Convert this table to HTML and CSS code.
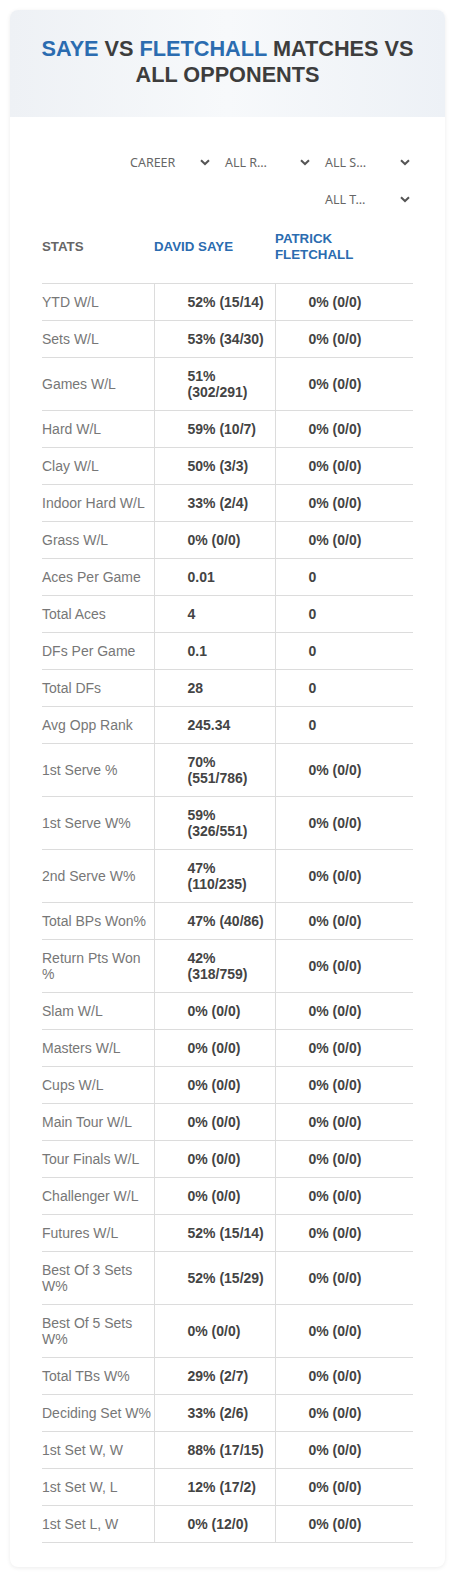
FILE: index.html
```html
<!DOCTYPE html>
<html>
  <head>
    <meta charset="utf-8" />
    <title>Saye vs Fletchall</title>
    <link rel="stylesheet" href="styles.css">
  </head>
  <body>
    <div class="card">
      <div class="card-header">
        <h1><span class="blue">SAYE</span> VS <span class="blue">FLETCHALL</span> MATCHES VS ALL OPPONENTS</h1>
      </div>

      <div class="filters">
        <div class="select first"><span>CAREER</span><svg width="10" height="7" viewBox="0 0 10 7"><path d="M1 1.2 L5 5 L9 1.2" fill="none" stroke="#555" stroke-width="2"/></svg></div>
        <div class="select"><span>ALL R…</span><svg width="10" height="7" viewBox="0 0 10 7"><path d="M1 1.2 L5 5 L9 1.2" fill="none" stroke="#555" stroke-width="2"/></svg></div>
        <div class="select"><span>ALL S…</span><svg width="10" height="7" viewBox="0 0 10 7"><path d="M1 1.2 L5 5 L9 1.2" fill="none" stroke="#555" stroke-width="2"/></svg></div>
        <div class="select"><span>ALL T…</span><svg width="10" height="7" viewBox="0 0 10 7"><path d="M1 1.2 L5 5 L9 1.2" fill="none" stroke="#555" stroke-width="2"/></svg></div>
      </div>

      <table class="stats">
        <colgroup>
          <col class="c1">
          <col class="c2">
          <col class="c3">
        </colgroup>
        <thead>
          <tr>
            <th class="muted">STATS</th>
            <th>DAVID SAYE</th>
            <th>PATRICK FLETCHALL</th>
          </tr>
        </thead>
        <tbody>
          <tr><td>YTD W/L</td><td>52% (15/14)</td><td>0% (0/0)</td></tr>
          <tr><td>Sets W/L</td><td>53% (34/30)</td><td>0% (0/0)</td></tr>
          <tr><td>Games W/L</td><td>51% (302/291)</td><td>0% (0/0)</td></tr>
          <tr><td>Hard W/L</td><td>59% (10/7)</td><td>0% (0/0)</td></tr>
          <tr><td>Clay W/L</td><td>50% (3/3)</td><td>0% (0/0)</td></tr>
          <tr><td>Indoor Hard W/L</td><td>33% (2/4)</td><td>0% (0/0)</td></tr>
          <tr><td>Grass W/L</td><td>0% (0/0)</td><td>0% (0/0)</td></tr>
          <tr><td>Aces Per Game</td><td>0.01</td><td>0</td></tr>
          <tr><td>Total Aces</td><td>4</td><td>0</td></tr>
          <tr><td>DFs Per Game</td><td>0.1</td><td>0</td></tr>
          <tr><td>Total DFs</td><td>28</td><td>0</td></tr>
          <tr><td>Avg Opp Rank</td><td>245.34</td><td>0</td></tr>
          <tr><td>1st Serve %</td><td>70% (551/786)</td><td>0% (0/0)</td></tr>
          <tr><td>1st Serve W%</td><td>59% (326/551)</td><td>0% (0/0)</td></tr>
          <tr><td>2nd Serve W%</td><td>47% (110/235)</td><td>0% (0/0)</td></tr>
          <tr><td>Total BPs Won%</td><td>47% (40/86)</td><td>0% (0/0)</td></tr>
          <tr><td>Return Pts Won %</td><td>42% (318/759)</td><td>0% (0/0)</td></tr>
          <tr><td>Slam W/L</td><td>0% (0/0)</td><td>0% (0/0)</td></tr>
          <tr><td>Masters W/L</td><td>0% (0/0)</td><td>0% (0/0)</td></tr>
          <tr><td>Cups W/L</td><td>0% (0/0)</td><td>0% (0/0)</td></tr>
          <tr><td>Main Tour W/L</td><td>0% (0/0)</td><td>0% (0/0)</td></tr>
          <tr><td>Tour Finals W/L</td><td>0% (0/0)</td><td>0% (0/0)</td></tr>
          <tr><td>Challenger W/L</td><td>0% (0/0)</td><td>0% (0/0)</td></tr>
          <tr><td>Futures W/L</td><td>52% (15/14)</td><td>0% (0/0)</td></tr>
          <tr><td>Best Of 3 Sets W%</td><td>52% (15/29)</td><td>0% (0/0)</td></tr>
          <tr><td>Best Of 5 Sets W%</td><td>0% (0/0)</td><td>0% (0/0)</td></tr>
          <tr><td>Total TBs W%</td><td>29% (2/7)</td><td>0% (0/0)</td></tr>
          <tr><td>Deciding Set W%</td><td>33% (2/6)</td><td>0% (0/0)</td></tr>
          <tr><td>1st Set W, W</td><td>88% (17/15)</td><td>0% (0/0)</td></tr>
          <tr><td>1st Set W, L</td><td>12% (17/2)</td><td>0% (0/0)</td></tr>
          <tr><td>1st Set L, W</td><td>0% (12/0)</td><td>0% (0/0)</td></tr>
        </tbody>
      </table>
    </div>
  </body>
</html>
```
FILE: styles.css
```css
body {
  margin: 0;
  padding: 10px;
  background: #fff;
  font-family: "Liberation Sans", Arial, sans-serif;
}

.card {
  background: #fff;
  border-radius: 8px;
  box-shadow: 0 1px 4px rgba(0, 0, 0, 0.08);
  padding-bottom: 24px;
}

.card-header {
  background: linear-gradient(90deg, #eef1f5 0%, #f7f9fb 50%, #edf1f6 100%);
  border-radius: 8px 8px 0 0;
  padding: 26px 20px 29px;
}

h1 {
  margin: 0;
  text-align: center;
  font-size: 21.7px;
  line-height: 26px;
  font-weight: bold;
  color: #3d3d3d;
}

.blue {
  color: #2b6cb0;
}

/* only three selects fit on a line, the last one wraps */
.filters {
  display: flex;
  flex-wrap: wrap;
  justify-content: flex-end;
  row-gap: 5px;
  width: 300px;
  margin: 29px 30px 0 auto;
}

.select {
  width: 100px;
  height: 32px;
  box-sizing: border-box;
  display: flex;
  align-items: center;
  justify-content: space-between;
  padding: 0 5px 0 10px;
  font-family: "Noto Sans", "Open Sans", sans-serif;
  font-size: 12.5px;
  color: #666;
}

.select.first {
  padding-left: 15px;
}

/* table */
.stats {
  width: 371px;
  margin: 0 0 0 32px;
  border-collapse: collapse;
  table-layout: fixed;
}

.c1 { width: 112px; }
.c2 { width: 121px; }
.c3 { width: 138px; }

.stats th {
  text-align: left;
  vertical-align: middle;
  font-size: 13.3px;
  line-height: 16px;
  font-weight: bold;
  color: #2b6cb0;
  padding: 16px 0 20px;
  border-bottom: 1px solid #dcdcdc;
}

.stats th.muted {
  color: #666;
}

.stats td {
  font-size: 14px;
  line-height: 16px;
  padding: 10px 8px 10px 33px;
  border-bottom: 1px solid #dcdcdc;
  border-left: 1px solid #dcdcdc;
  font-weight: bold;
  color: #444;
  vertical-align: middle;
}

.stats td:first-child {
  padding: 10px 0;
  border-left: none;
  font-weight: normal;
  color: #777;
}
```
